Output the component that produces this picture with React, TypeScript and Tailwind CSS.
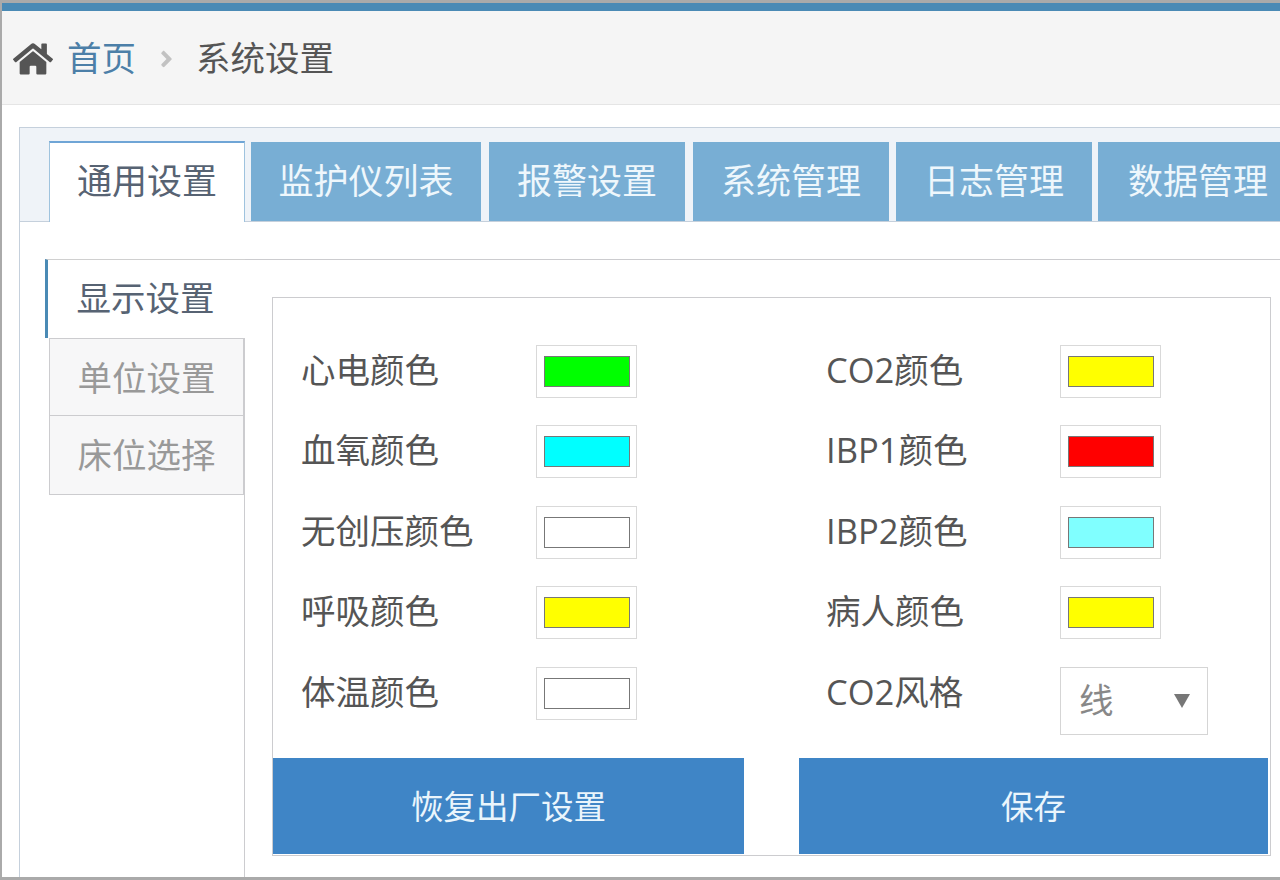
import { FaAngleRight, FaHome } from 'react-icons/fa';

const font = { fontFamily: '"Open Sans", "Noto Sans CJK SC", sans-serif' };

const topTabs = [
  { label: '监护仪列表', className: 'w-[230px] mr-[8px]' },
  { label: '报警设置', className: 'w-[196px] mr-[8px]' },
  { label: '系统管理', className: 'w-[196px] mr-[7px]' },
  { label: '日志管理', className: 'w-[196px] mr-[6px]' },
  { label: '数据管理', className: 'w-[200px]' },
];

const rows: [string, string, string, string | null][] = [
  ['心电颜色', 'bg-[#00ff00]', 'CO2颜色', 'bg-[#ffff00]'],
  ['血氧颜色', 'bg-[#00ffff]', 'IBP1颜色', 'bg-[#ff0000]'],
  ['无创压颜色', 'bg-white', 'IBP2颜色', 'bg-[#80ffff]'],
  ['呼吸颜色', 'bg-[#ffff00]', '病人颜色', 'bg-[#ffff00]'],
  ['体温颜色', 'bg-white', 'CO2风格', null],
];

const Swatch = ({ color }: { color: string }) => (
  <div className="flex h-[53px] w-[101px] items-center justify-center border border-[#d9d9d9] bg-white">
    <div className={`h-[31px] w-[86px] border border-[#777] ${color}`} />
  </div>
);

const StyleSelect = () => (
  <div className="flex h-[68px] w-[148px] items-center justify-between border border-[#d5d5d5] bg-white pl-[18px] pr-[17px] text-[#888]">
    <span>线</span>
    <span className="h-0 w-0 border-x-[8px] border-t-[14px] border-x-transparent border-t-[#777]" />
  </div>
);

export default function App() {
  return (
    <div
      className="h-[880px] w-[1280px] overflow-hidden border-y-[3px] border-l-2 border-[#aaaaaa] bg-white text-[34.5px] leading-none text-[#555]"
      style={font}
    >
      <div className="h-[8px] bg-[#4a8ab5]" />
      <header className="flex h-[94px] items-center border-b border-[#e5e5e5] bg-[#f5f5f5] pl-[11px] pt-[2px]">
        <FaHome className="mr-[14px] h-[36px] w-[40px] shrink-0 text-[#555]" />
        <a className="text-[#4c7fa8]" href="#">
          首页
        </a>
        <FaAngleRight className="ml-[22px] mr-[21px] h-[26px] w-[17px] shrink-0 text-[#c2c2c2]" />
        <span>系统设置</span>
      </header>

      <div className="pl-[17px] pt-[22px]">
        <div className="border-l border-t border-[#c5d0dc]">
          <nav className="flex h-[94px] items-end border-b border-[#c5d0dc] bg-[#eff3f8] pl-[29px] text-[35px]">
            <div className="relative z-10 -mb-px mr-[6px] flex h-[81px] w-[196px] shrink-0 items-center justify-center border-x border-t-2 border-x-[#9fc3de] border-t-[#6fa5d6] bg-white pb-[4px] text-[#576373]">
              通用设置
            </div>
            {topTabs.map((tab) => (
              <div
                key={tab.label}
                className={`flex h-[79px] shrink-0 items-center justify-center bg-[#78aed4] pb-[3px] text-[#eef7fc] ${tab.className}`}
              >
                {tab.label}
              </div>
            ))}
          </nav>

          <div className="flex pl-[25px] pt-[37px]">
            <aside className="relative z-10 -mr-px w-[200px] shrink-0">
              <div className="flex h-[79px] items-center justify-center border-l-[3px] border-t border-l-[#4a8ab5] border-t-[#d0d0d0] bg-white pb-[2px] pr-[2px] text-[#576373]">
                显示设置
              </div>
              <div className="ml-[4px] w-[195px] border border-[#cccccf] bg-[#f7f7f8] text-[#999]">
                <div className="flex h-[77px] items-center justify-center border-b border-[#cccccf] pt-[2px]">单位设置</div>
                <div className="flex h-[78px] items-center justify-center">床位选择</div>
              </div>
            </aside>

            <div className="h-[640px] flex-1 border-l border-t border-[#cccccf] pl-[27px] pt-[37px]">
              <section className="h-[559px] w-[999px] border border-[#cccccf]">
                <div className="grid grid-cols-[525px_1fr] gap-y-[27.4px] pl-[28px] pt-[47px]">
                  {rows.map(([left, leftColor, right, rightColor]) => (
                    <div key={left} className="contents">
                      <div className="flex items-start">
                        <span className="mt-[8px] w-[235px] shrink-0">{left}</span>
                        <Swatch color={leftColor} />
                      </div>
                      <div className="flex items-start">
                        <span className="mt-[8px] w-[234px] shrink-0">{right}</span>
                        {rightColor ? <Swatch color={rightColor} /> : <StyleSelect />}
                      </div>
                    </div>
                  ))}
                </div>
                <div className="mt-[23px] flex justify-between pr-[2px] text-[32.5px] text-[#eaf5fc]">
                  <button className="h-[96px] w-[471px] bg-[#3f85c6] pt-[3px]">恢复出厂设置</button>
                  <button className="h-[96px] w-[469px] bg-[#3f85c6] pt-[3px]">保存</button>
                </div>
              </section>
            </div>
          </div>
        </div>
      </div>
    </div>
  );
}
